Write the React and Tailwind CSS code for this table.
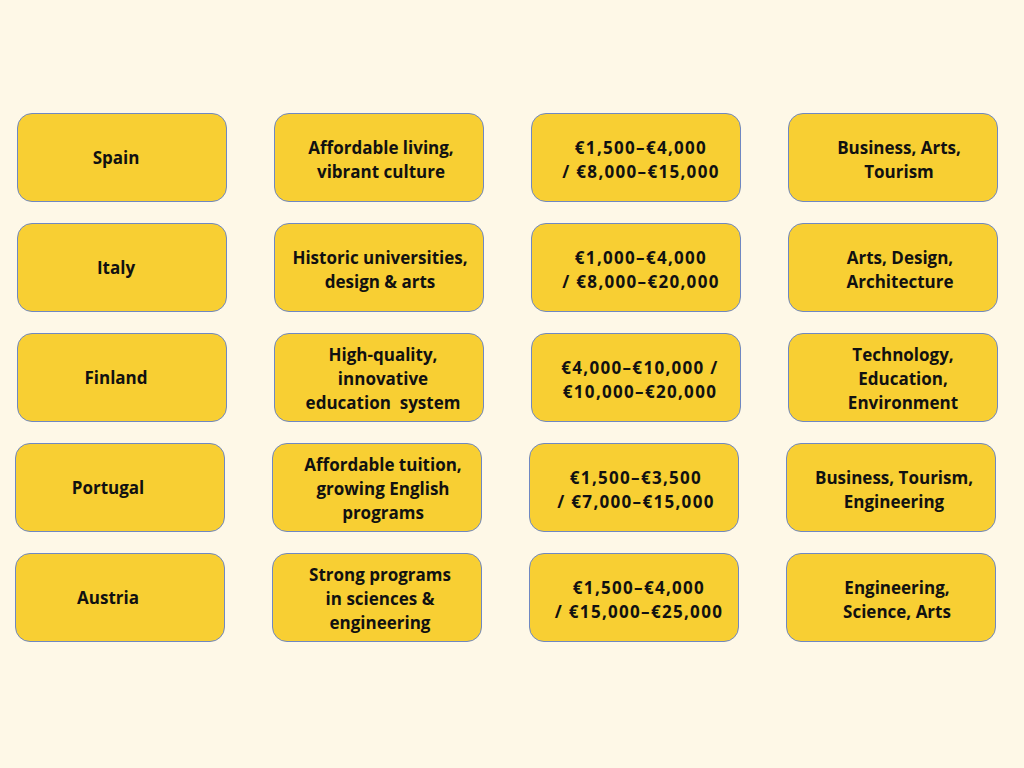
import React from "react";

// each cell: lines of text + a nudge class (the source text isn't perfectly centred)
const rows = [
	{
		offset: "pl-[17px]",
		cells: [
			{ lines: ["Spain"], nudge: "pr-[12px]" },
			{ lines: ["Affordable living,", "vibrant culture"], nudge: "pl-[4px]" },
			{ lines: ["€1,500–€4,000", "/ €8,000–€15,000"], nudge: "pl-[10px]", price: true },
			{ lines: ["Business, Arts,", "Tourism"], nudge: "pl-[12px]" },
		],
	},
	{
		offset: "pl-[17px]",
		cells: [
			{ lines: ["Italy"], nudge: "pr-[12px]" },
			{ lines: ["Historic universities,", "design & arts"], nudge: "pl-[2px]" },
			{ lines: ["€1,000–€4,000", "/ €8,000–€20,000"], nudge: "pl-[10px]", price: true },
			{ lines: ["Arts, Design,", "Architecture"], nudge: "pl-[14px]" },
		],
	},
	{
		offset: "pl-[17px]",
		cells: [
			{ lines: ["Finland"], nudge: "pr-[12px]" },
			{
				lines: ["High-quality,", "innovative", "education  system"],
				nudge: "pl-[8px]",
			},
			{ lines: ["€4,000–€10,000 /", "€10,000–€20,000"], nudge: "pl-[8px]", price: true },
			{
				lines: ["Technology,", "Education,", "Environment"],
				nudge: "pl-[20px]",
			},
		],
	},
	{
		offset: "pl-[15px]",
		cells: [
			{ lines: ["Portugal"], nudge: "pr-[24px]" },
			{
				lines: ["Affordable tuition,", "growing English", "programs"],
				nudge: "pl-[12px]",
			},
			{ lines: ["€1,500–€3,500", "/ €7,000–€15,000"], nudge: "pl-[4px]", price: true },
			{ lines: ["Business, Tourism,", "Engineering"], nudge: "pl-[6px]" },
		],
	},
	{
		offset: "pl-[15px]",
		cells: [
			{ lines: ["Austria"], nudge: "pr-[24px]" },
			{
				lines: ["Strong programs", "in sciences &", "engineering"],
				nudge: "pl-[6px]",
			},
			{ lines: ["€1,500–€4,000", "/ €15,000–€25,000"], nudge: "pl-[10px]", price: true },
			{ lines: ["Engineering,", "Science, Arts"], nudge: "pl-[12px]" },
		],
	},
];

const Card = ({ lines, nudge, price }) => (
	<div
		className={`w-[210px] h-[89px] shrink-0 rounded-[15px] border border-[#6f88c2] bg-[#f8cf33] flex flex-col items-center justify-center text-center ${nudge} ${
			lines.length > 2 ? "pt-[2px]" : lines.length > 1 ? "pt-[4px]" : ""
		} ${price ? "tracking-[1.3px]" : ""}`}
	>
		{lines.map((line) => (
			<span key={line} className="whitespace-pre leading-[24px]">
				{line}
			</span>
		))}
	</div>
);

export default function App() {
	return (
		<div
			className="w-[1024px] h-[768px] bg-[#fef8e7] pt-[113px] flex flex-col gap-[21px] text-[17px] font-bold text-[#111111]"
			style={{ fontFamily: '"Open Sans", sans-serif' }}
		>
			{rows.map((row, i) => (
				<div key={i} className={`flex gap-[47px] ${row.offset}`}>
					{row.cells.map((cell, j) => (
						<Card key={j} {...cell} />
					))}
				</div>
			))}
		</div>
	);
}
